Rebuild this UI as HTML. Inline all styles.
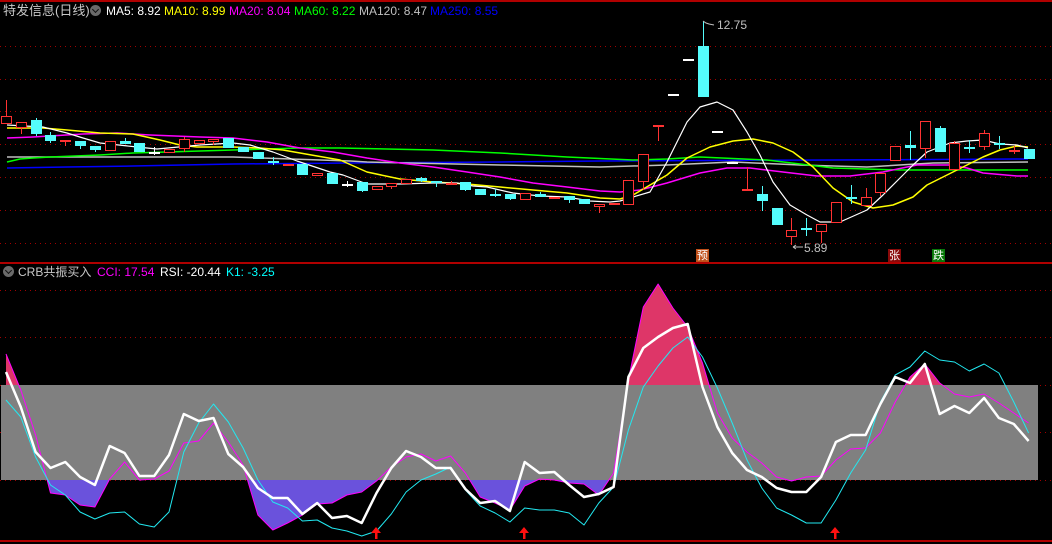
<!DOCTYPE html>
<html><head><meta charset="utf-8">
<style>
html,body{margin:0;padding:0;background:#000;width:1052px;height:544px;overflow:hidden}
#w{position:relative;width:1052px;height:544px}
svg{position:absolute;left:0;top:0}
.t{position:absolute;font-family:"Liberation Sans","Noto Sans CJK SC",sans-serif;white-space:nowrap;font-size:12px;line-height:14px}
.ic{position:absolute;width:11px;height:11px;border-radius:50%;background:#6a6a6a}
.ic:after{content:"";position:absolute;left:3px;top:2px;width:4px;height:4px;border-right:1.5px solid #111;border-bottom:1.5px solid #111;transform:rotate(45deg)}
.bx{position:absolute;width:13px;height:13px;font-family:"Noto Sans CJK SC",sans-serif;font-size:11px;line-height:13px;text-align:center;color:#fff}
</style></head><body><div id="w">
<svg id="s" width="1052" height="544" xmlns="http://www.w3.org/2000/svg"></svg>
<div class="t" style="left:3px;top:4px;color:#c8c8c8;font-size:13px">特发信息(日线)</div>
<div class="ic" style="left:90px;top:5px"></div>
<div class="t" style="left:106px;top:4px;color:#fff">MA5: 8.92</div>
<div class="t" style="left:164px;top:4px;color:#ff0">MA10: 8.99</div>
<div class="t" style="left:229px;top:4px;color:#f0f">MA20: 8.04</div>
<div class="t" style="left:294px;top:4px;color:#0f0">MA60: 8.22</div>
<div class="t" style="left:359px;top:4px;color:#c0c0c0">MA120: 8.47</div>
<div class="t" style="left:430px;top:4px;color:#0000ff">MA250: 8.55</div>
<div class="ic" style="left:3px;top:266px"></div>
<div class="t" style="left:18px;top:265px;color:#c8c8c8">CRB共振买入</div>
<div class="t" style="left:97px;top:265px;color:#f0f">CCI: 17.54</div>
<div class="t" style="left:160px;top:265px;color:#fff">RSI: -20.44</div>
<div class="t" style="left:226px;top:265px;color:#0ff">K1: -3.25</div>
<div class="t" style="left:717px;top:18px;color:#c0c0c0;font-size:12px">12.75</div>
<div class="t" style="left:804px;top:241px;color:#c0c0c0;font-size:12px">5.89</div>
<div class="bx" style="left:696px;top:249px;background:#c0501a">预</div>
<div class="bx" style="left:888px;top:249px;background:#8a0a0a">张</div>
<div class="bx" style="left:932px;top:249px;background:#087808">跌</div>
</div>
<script>
var S=document.getElementById('s'),h='';
function X(i){return 6+14.82*i}
// grids
[46,79,111,144,177,210,243,290,337,385,432,480].forEach(function(y){h+='<line x1="0" x2="1052" y1="'+(y+.5)+'" y2="'+(y+.5)+'" stroke="#a00000" stroke-dasharray="1 4"/>'});
h+='<rect x="0" y="0" width="1052" height="2" fill="#b00000"/>';
h+='<rect x="0" y="262" width="1052" height="2" fill="#b00000"/>';
h+='<rect x="0" y="540" width="1052" height="2" fill="#b00000"/>';
function pl(a,c,w){h+='<polyline fill="none" stroke="'+c+'" stroke-width="'+(w||1)+'" stroke-linejoin="round" points="'+a+'"/>'}
// MAs
pl("600,161 833,160 1028,159".replace(/^/,"7,168 67,167 133,166 233,164 350,163 500,162 "),"#0000ff",1.5);
pl("7,157 133,157 233,157 350,161 367,162 500,165 600,167 667,165 733,162 800,165 867,167 933,163 1028,162","#c0c0c0",1.5);
pl("7,162 20,159 33,158 50,157 100,155 133,153 167,152 233,150 300,148 340,148 433,150 500,153 567,157 633,160 667,159 700,157 767,160 833,168 900,170 1028,170","#00ff00",1.5);
pl("7,138 33,137 83,134 117,133 150,135 200,137 233,138 267,142 300,148 333,152 367,158 400,163 433,167 467,172 500,177 533,183 567,187 600,191 620,192 640,190 667,183 700,173 727,168 750,168 783,172 817,176 850,176 883,172 917,165 950,165 967,168 983,173 1017,176 1028,176","#ff00ff",1.5);
pl("7,128 43,128 67,130 100,133 133,134 160,140 180,145 197,147 233,147 260,148 283,150 300,153 340,160 367,172 400,179 433,182 467,184 500,187 533,190 567,193 600,198 620,199 633,195 667,175 687,158 710,147 733,141 753,139 773,143 793,152 813,167 833,188 853,202 873,208 893,205 913,197 927,185 947,175 967,165 983,157 1000,150 1017,146 1028,147","#ffff00",1.5);
pl("7,125 43,127 67,133 83,138 100,143 137,147 157,149 200,145 233,143 250,145 273,152 297,161 330,172 343,175 367,184 400,184 433,183 457,183 473,186 487,187 513,193 540,196 567,197 590,201 610,202 620,201 633,197 650,192 667,162 687,122 700,107 717,102 733,110 747,132 760,155 773,182 790,205 807,215 820,222 840,222 867,210 883,195 900,178 913,165 927,152 950,143 967,141 983,140 1000,144 1017,145 1028,148","#ffffff",1.2);
// candles
var C=[[0,'r',116,124,100,124],[1,'r',122,128,122,134],[2,'c',120,134,118,136],[3,'c',135,141,132,143],[4,'R',140,142,140,146],[5,'c',141,146,141,149],[6,'c',146,150,146,152],[7,'r',141,151,141,151],[8,'c',141,144,138,144],[9,'c',143,152,143,152],[10,'w',152,153,147,155],[11,'r',149,153,149,153],[12,'r',139,149,137,152],[13,'r',140,144,140,144],[14,'r',139,142,139,145],[15,'c',138,148,138,148],[16,'c',147,152,147,152],[17,'c',152,159,152,159],[18,'c',161,163,157,165],[19,'r',164,166,164,166],[20,'c',164,175,164,175],[21,'r',173,176,173,176],[22,'c',173,184,173,184],[23,'w',184,185,181,187],[24,'c',182,191,182,192],[25,'r',186,190,186,190],[26,'r',183,187,183,189],[27,'r',179,184,179,184],[28,'c',178,181,177,182],[29,'c',181,183,181,187],[30,'R',183,184,181,185],[31,'c',182,190,182,191],[32,'c',189,195,189,195],[33,'c',194,195,189,197],[34,'c',194,199,194,200],[35,'r',193,200,193,200],[36,'c',194,197,192,197],[37,'R',197,199,197,199],[38,'c',196,200,196,203],[39,'c',199,204,199,204],[40,'r',204,207,204,213],[41,'R',203,205,203,205],[42,'r',180,205,180,205],[43,'r',154,182,154,190],[44,'r',125,127,125,141],[45,'w',94,95,94,95],[46,'w',59,60,59,60],[47,'c',46,97,21,97],[48,'w',131,132,131,132],[49,'w',162,163,162,163],[50,'R',189,191,167,191],[51,'c',194,201,186,211],[52,'c',208,225,208,225],[53,'r',230,237,218,245],[54,'c',228,230,218,236],[55,'r',224,232,224,243],[56,'r',202,223,202,223],[57,'c',197,198,185,204],[58,'r',197,206,188,206],[59,'r',173,193,173,196],[60,'r',146,161,146,161],[61,'c',145,148,131,160],[62,'r',121,149,121,158],[63,'c',128,152,126,152],[64,'r',143,170,141,170],[65,'c',147,148,140,153],[66,'r',133,147,130,150],[67,'c',143,144,136,149],[68,'R',150,152,146,154],[69,'c',149,159,149,159]];
C.forEach(function(c){var x=Math.round(X(c[0])),col=c[1]=='c'?'#54fcfc':c[1]=='w'?'#ffffff':'#ff3232';
h+='<rect x="'+x+'" y="'+c[4]+'" width="1" height="'+(c[5]-c[4])+'" fill="'+col+'"/>';
var bh=Math.max(c[3]-c[2],1);
if(c[1]=='r')h+='<rect x="'+(x-4.5)+'" y="'+(c[2]+.5)+'" width="10" height="'+Math.max(bh-1,1)+'" fill="#000" stroke="'+col+'"/>';
else h+='<rect x="'+(x-5)+'" y="'+c[2]+'" width="11" height="'+Math.max(bh,2)+'" fill="'+col+'"/>';});
h+='<path d="M703 21 L706 23 L709 24 L714 25" stroke="#c0c0c0" fill="none"/><path d="M793 247 H803 M793 247 l3 -2 M793 247 l3 2" stroke="#c0c0c0" fill="none"/>';
// bottom
h+='<rect x="1" y="385" width="1037" height="95" fill="#808080"/>';
var M=[354,390,435,493,495,505,507,479,462,480,479,471,443,441,423,442,465,515,530,523,515,504,503,495,492,481,467,457,454,461,456,473,497,503,510,486,479,480,483,484,495,473,380,307,284,308,327,363,413,438,452,463,477,481,477,476,460,449,448,433,402,377,364,383,394,397,394,403,413,423];
var W=[372,407,452,468,462,477,485,446,453,476,476,455,414,421,418,454,467,488,498,498,514,503,518,516,523,493,468,451,457,468,468,489,503,501,511,462,473,472,485,497,494,487,377,348,337,328,324,387,427,453,470,477,488,492,492,477,442,435,435,404,377,383,364,414,406,413,398,418,424,441];
var K=[400,417,457,485,495,512,519,513,512,524,527,512,452,423,404,422,448,480,502,508,521,520,528,531,536,531,514,492,480,474,467,490,506,513,522,508,510,510,513,525,503,487,430,387,366,348,337,357,388,423,460,488,508,515,523,523,500,473,450,402,375,367,351,360,362,371,364,373,402,433];
function pts(a){return a.map(function(v,i){return X(i).toFixed(1)+','+v}).join(' ')}
var mp=pts(M),L=X(0).toFixed(1),R=X(69).toFixed(1);
h+='<defs><clipPath id="a"><rect x="0" y="0" width="1052" height="385"/></clipPath><clipPath id="b"><rect x="0" y="480" width="1052" height="64"/></clipPath></defs>';
h+='<polygon clip-path="url(#a)" fill="#de3668" points="'+L+',385 '+mp+' '+R+',385"/>';
h+='<polygon clip-path="url(#b)" fill="#6a52dc" points="'+L+',480 '+mp+' '+R+',480"/>';
pl(mp,"#ff00ff",1);
pl(pts(K),"#22e8f0",1);
pl(pts(W),"#ffffff",2.5);
[376,524,835].forEach(function(x){h+='<path d="M'+(x-5)+' 533 L'+x+' 527 L'+(x+5)+' 533 Z M'+(x-1)+' 533 h2.5 v6 h-2.5z" fill="#ff1010"/>'});
S.innerHTML=h;
</script>
</body></html>
